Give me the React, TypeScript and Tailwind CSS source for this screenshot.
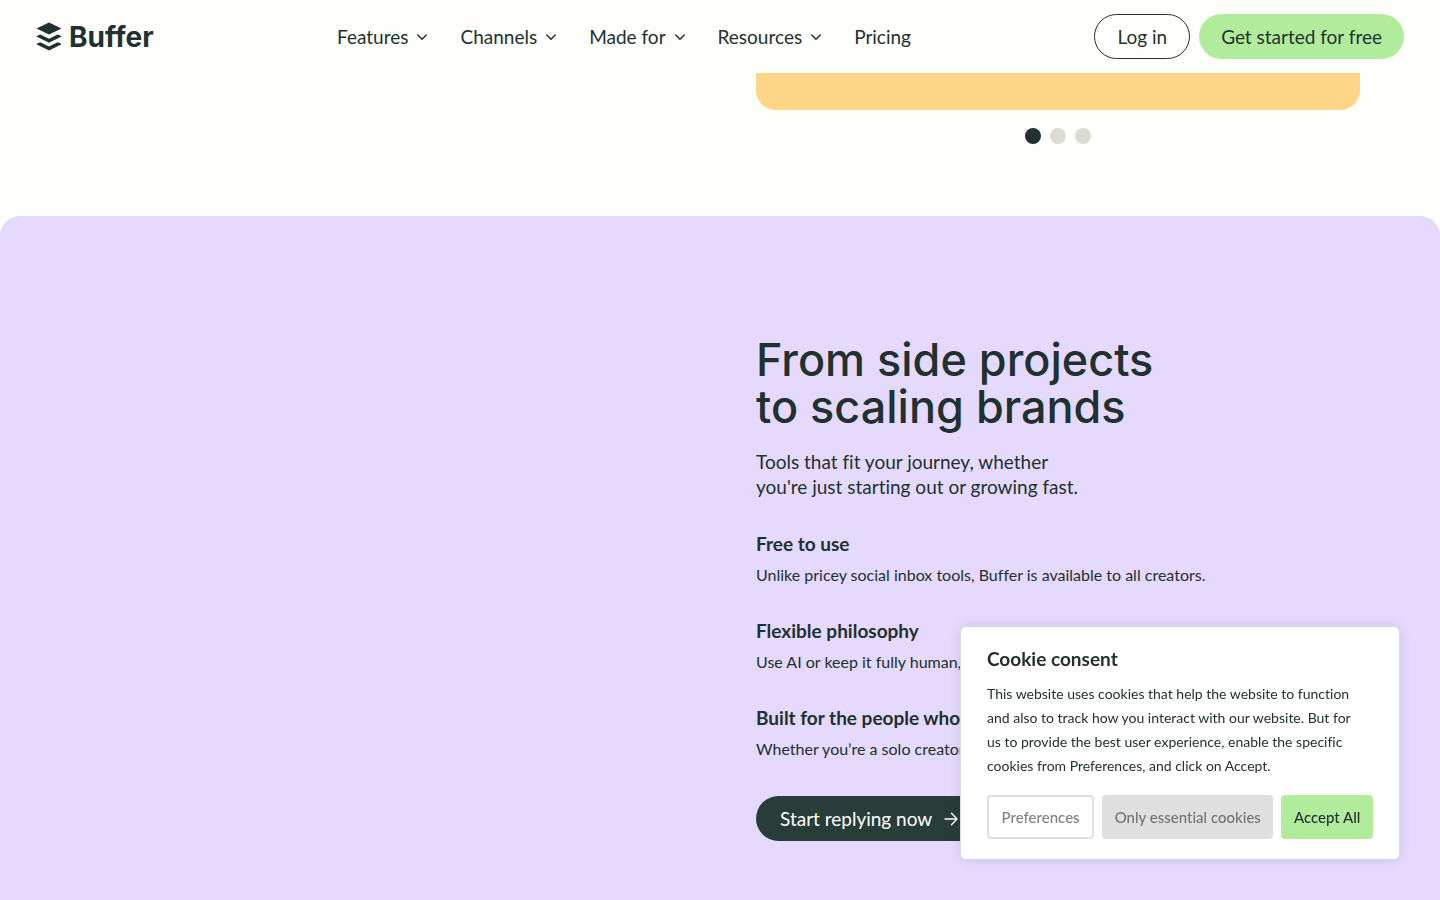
import { useState } from "react";
import { clsx } from "clsx";

const navItems = [
  { label: "Features", menu: true },
  { label: "Channels", menu: true },
  { label: "Made for", menu: true },
  { label: "Resources", menu: true },
  { label: "Pricing", menu: false },
];

const points = [
  {
    title: "Free to use",
    text: "Unlike pricey social inbox tools, Buffer is available to all creators.",
  },
  {
    title: "Flexible philosophy",
    text: "Use AI or keep it fully human,",
  },
  {
    title: "Built for the people who",
    text: "Whether you’re a solo creator",
  },
];

function LogoMark() {
  return (
    <svg width="26" height="29" viewBox="0 0 26 29" fill="currentColor" aria-hidden="true">
      <path d="M13 .4 25.5 6.5 13 12.6.5 6.5Z" />
      <path d="M.9 14 3.6 12.7Q4.2 12.5 4.8 12.7L13 16.7 21.2 12.7Q21.8 12.5 22.4 12.7L25.1 14Q25.7 14.4 25.1 14.8L13 20.7.9 14.8Q.3 14.4.9 14Z" />
      <path d="M.9 21.7 3.6 20.4Q4.2 20.2 4.8 20.4L13 24.4 21.2 20.4Q21.8 20.2 22.4 20.4L25.1 21.7Q25.7 22.1 25.1 22.5L13 28.5.9 22.5Q.3 22.1.9 21.7Z" />
    </svg>
  );
}

function Chevron() {
  return (
    <svg width="12" height="12" viewBox="0 0 12 12" fill="none" stroke="currentColor" strokeWidth="1.5" strokeLinecap="round" strokeLinejoin="round" aria-hidden="true">
      <path d="M1.8 4 6 8.2 10.2 4" />
    </svg>
  );
}

function Arrow() {
  return (
    <svg width="14" height="14" viewBox="0 0 14 14" fill="none" stroke="currentColor" strokeWidth="1.4" strokeLinecap="round" strokeLinejoin="round" aria-hidden="true">
      <path d="M1 7H13M7.5 1.2 13 7 7.5 12.8" />
    </svg>
  );
}

function Header() {
  return (
    <header className="sticky top-0 z-10 flex h-[73px] items-center justify-between bg-[#fefffa] px-9">
      <a href="#home" className="flex items-center gap-[7px]">
        <LogoMark />
        <span className="font-[Inter] text-[28px] leading-8 font-bold">Buffer</span>
      </a>
      <nav className="flex items-center gap-8">
        {navItems.map((item) =>
          item.menu ? (
            <button key={item.label} type="button" className="flex items-center gap-2">
              {item.label}
              <Chevron />
            </button>
          ) : (
            <a key={item.label} href="#pricing">
              {item.label}
            </a>
          )
        )}
      </nav>
      <div className="flex items-center gap-[9px]">
        <a href="#login" className="flex h-[45px] items-center rounded-full border border-[#213130] px-[22px]">
          Log in
        </a>
        <a href="#signup" className="flex h-[45px] items-center rounded-full bg-[#b1ec9c] px-[22px]">
          Get started for free
        </a>
      </div>
    </header>
  );
}

function Carousel() {
  const [slide, setSlide] = useState(0);

  return (
    <section className="grid grid-cols-2 gap-[72px] px-20 pb-[72px]">
      <div className="col-start-2">
        <div className="h-[37px] rounded-b-[20px] bg-[#ffd688]" />
        <div className="mt-[18px] flex justify-center gap-[9px]">
          {[0, 1, 2].map((i) => (
            <button
              key={i}
              type="button"
              aria-label={`Slide ${i + 1}`}
              onClick={() => setSlide(i)}
              className={clsx("size-4 rounded-full", i === slide ? "bg-[#213130]" : "bg-[#dcdcd3]")}
            />
          ))}
        </div>
      </div>
    </section>
  );
}

function CookieConsent({ onClose }: { onClose: () => void }) {
  return (
    <aside
      aria-label="Cookie consent"
      className="fixed right-10 bottom-10 z-20 w-[440px] rounded-md border border-[#dcd5e6] bg-white px-[26px] pt-[18px] pb-5 shadow-[0_0_12px_rgba(33,49,48,0.12)]"
    >
      <h2 className="leading-7 font-bold">Cookie consent</h2>
      <p className="mt-[9px] text-[14px] leading-6">
        This website uses cookies that help the website to function
        <br />
        and also to track how you interact with our website. But for
        <br />
        us to provide the best user experience, enable the specific
        <br />
        cookies from Preferences, and click on Accept.
      </p>
      <div className="mt-[17px] flex gap-2 text-[15px] font-medium">
        <button type="button" onClick={onClose} className="h-11 flex-auto rounded-sm border-2 border-[#dfdfdf] text-[#808080]">
          Preferences
        </button>
        <button type="button" onClick={onClose} className="h-11 flex-auto rounded-sm bg-[#dfdfdf] text-[#737373]">
          Only essential cookies
        </button>
        <button type="button" onClick={onClose} className="h-11 flex-auto rounded-sm bg-[#b1ec9c]">
          Accept All
        </button>
      </div>
    </aside>
  );
}

export default function App() {
  const [showConsent, setShowConsent] = useState(true);

  return (
    <div className="flex min-h-screen flex-col bg-[#fefffa] font-[Lato,sans-serif] text-[19px] leading-[25px] text-[#213130] [font-variant-ligatures:none]">
      <Header />
      <main className="flex flex-1 flex-col">
        <Carousel />
        <section className="grid flex-1 grid-cols-2 gap-[72px] rounded-t-[20px] bg-[#e5d9fe] px-20 pt-[120px] pb-14">
          <div className="col-start-2">
            <h2 className="font-[Inter] text-[45px] leading-[47px] font-medium">
              From side projects
              <br />
              to scaling brands
            </h2>
            <p className="mt-[19px]">
              Tools that fit your journey, whether
              <br />
              you're just starting out or growing fast.
            </p>
            <ul className="mt-8 flex flex-col gap-[31px]">
              {points.map((point) => (
                <li key={point.title}>
                  <h3 className="font-bold">{point.title}</h3>
                  <p className="mt-[7px] text-[16px] leading-6">{point.text}</p>
                </li>
              ))}
            </ul>
            <a href="#start" className="mt-[35px] inline-flex h-[45px] items-center gap-3 rounded-full bg-[#283c39] px-6 text-white">
              Start replying now
              <Arrow />
            </a>
          </div>
        </section>
      </main>
      {showConsent && <CookieConsent onClose={() => setShowConsent(false)} />}
    </div>
  );
}
